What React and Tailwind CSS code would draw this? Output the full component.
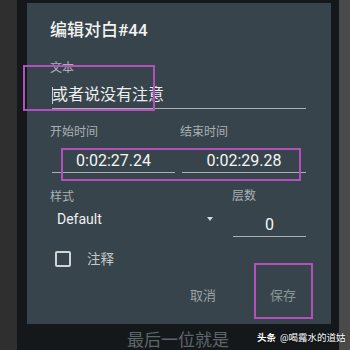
import React from "react";

const FONT = { fontFamily: 'Roboto, "Noto Sans CJK SC", sans-serif' };

function Field({ children, className = "" }) {
  return (
    <div className={`border-b border-[#aab2b6] ${className}`}>{children}</div>
  );
}

export default function App() {
  return (
    <div className="relative flex h-[350px] w-[350px] overflow-hidden bg-[#2f2f2f]" style={FONT}>
      <div className="w-[17px] shrink-0" />
      <div className="flex w-[322px] shrink-0 flex-col bg-[#14181b]">
        <div className="ml-[10px] mt-[3px] h-[323px] w-[304px] bg-[#37444b] pl-[23px] pr-[25px]">
          <div className="pt-[17px]">
            <div className="h-[20px] text-[17px] leading-[20px] font-medium text-[#f2f3f3]">编辑对白#44</div>
          </div>

          <div className="mt-[21px] h-[14px] text-[12px] leading-[14px] text-[#a9b1b5]">文本</div>
          <Field className="relative ml-[2px] mt-[10px] pb-[3px]">
            <div className="text-[16px] leading-[20px] text-[#eceeef]">或者说没有注意</div>
            <div className="absolute left-0 top-[2px] h-[17px] w-px bg-[#c9cfd2]" />
          </Field>

          <div className="mt-[16px] flex h-[14px] text-[12px] leading-[14px] text-[#a9b1b5]">
            <div className="w-[130px]">开始时间</div>
            <div>结束时间</div>
          </div>
          <div className="mt-[12px] flex">
            <Field className="ml-[2px] w-[123px] pb-[1px] text-center">
              <div className="text-[16px] leading-[20px] text-[#f4f5f5]">0:02:27.24</div>
            </Field>
            <Field className="ml-[7px] w-[124px] pb-[1px] text-center">
              <div className="text-[16px] leading-[20px] text-[#f4f5f5]">0:02:29.28</div>
            </Field>
          </div>

          <div className="mt-[17px] flex h-[14px] text-[12px] leading-[14px] text-[#a9b1b5]">
            <div className="w-[182px]">样式</div>
            <div className="-mt-[1px]">层数</div>
          </div>
          <div className="mt-[5px] flex h-[28px] items-start">
            <div className="ml-[7px] w-[150px] text-[14px] leading-[20px] text-[#eef0f0]">Default</div>
            <div className="mt-[8px] h-0 w-0 border-x-[3.5px] border-t-[4.5px] border-x-transparent border-t-[#d4d8da]" />
            <Field className="ml-[20px] mt-[6px] w-[73px] pb-[1px] text-center">
              <div className="text-[16px] leading-[20px] text-[#f4f5f5]">0</div>
            </Field>
          </div>

          <div className="mt-[14px] flex items-center">
            <div className="ml-[5px] h-[16px] w-[16px] rounded-[2px] border-2 border-[#cfd4d6]" />
            <div className="ml-[16px] text-[13.5px] leading-[16px] text-[#c3c9cc]">注释</div>
          </div>

          <div className="mt-[21px] flex justify-end gap-[54px] pr-[10px] text-[13px] leading-[16px]">
            <div className="text-[#9ba3a7]">取消</div>
            <div className="text-[#8b9498]">保存</div>
          </div>
        </div>
        <div className="mt-[6px] text-center text-[17px] leading-[20px] text-[#5d666b]">最后一位就是</div>
      </div>
      <div className="flex-1 bg-[#4a4a4a]" />

      {/* annotation boxes */}
      <div className="absolute left-[23px] top-[65px] h-[46px] w-[132px] border-2 border-[#b450be]" />
      <div className="absolute left-[61px] top-[148px] h-[33px] w-[240px] border-2 border-[#b450be]" />
      <div className="absolute left-[254px] top-[263px] h-[56px] w-[59px] border-2 border-[#b450be]" />

      <div
        className="absolute left-[257px] top-[332px] flex gap-[4px] whitespace-nowrap text-[9.5px] leading-[11px] text-white"
        style={{ textShadow: "0 0 2px rgba(0,0,0,0.8)" }}
      >
        <span className="font-bold">头条</span>
        <span>@喝露水的道姑</span>
      </div>
    </div>
  );
}
